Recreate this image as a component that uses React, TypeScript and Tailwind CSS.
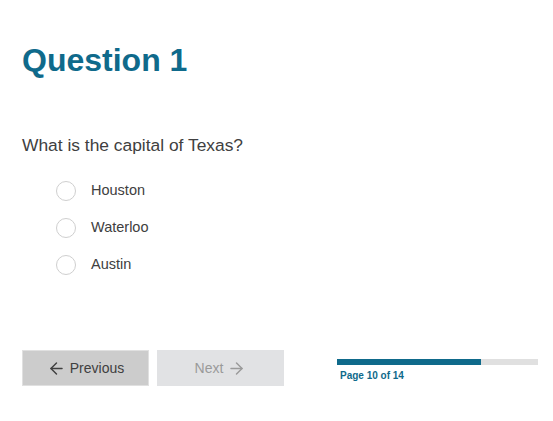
import { ArrowLeft, ArrowRight } from "lucide-react";

const options = ["Houston", "Waterloo", "Austin"];

export default function App() {
    const page = 10;
    const total = 14;

    return (
        <div className="min-h-[421px] w-[553px] bg-white font-['Liberation_Sans',Arial,sans-serif] text-[#404040]">
            <div className="pl-[22px] pt-[42px]">
                <h1 className="text-[32px] font-bold leading-[37px] text-[#0f6a8b]">Question 1</h1>

                <p className="mt-[56px] text-[17.4px] leading-[20px]">What is the capital of Texas?</p>

                {/* Options */}
                <div className="mt-[17px] flex flex-col pl-[34px]">
                    {options.map((opt) => (
                        <label key={opt} className="flex h-[37px] items-center gap-[15px]">
                            <span className="h-[20px] w-[20px] rounded-full border border-[#cfcfcf] bg-white" />
                            <span className="text-[14.5px]">{opt}</span>
                        </label>
                    ))}
                </div>

                {/* Footer */}
                <div className="mt-[67px] flex items-start">
                    <button className="flex h-[36px] w-[127px] items-center justify-center gap-[4px] border border-[#e0e0e0] bg-[#cccccc] text-[14px] text-[#404040]">
                        <ArrowLeft size={19} strokeWidth={1.8} />
                        Previous
                    </button>
                    <button className="ml-[8px] flex h-[36px] w-[127px] items-center justify-center gap-[4px] bg-[#e1e2e4] text-[14px] text-[#9a9a9a]">
                        Next
                        <ArrowRight size={19} strokeWidth={1.8} />
                    </button>

                    <div className="ml-[53px] mt-[9px] w-[201px]">
                        <div className="h-[6px] w-full bg-[#e0e0e0]">
                            <div className="h-full bg-[#0f6a8b]" style={{ width: `${(page / total) * 100}%` }} />
                        </div>
                        <div className="mt-[5px] pl-[3px] text-[10px] font-bold leading-[12px] text-[#0f6a8b]">
                            Page {page} of {total}
                        </div>
                    </div>
                </div>
            </div>
        </div>
    );
}
